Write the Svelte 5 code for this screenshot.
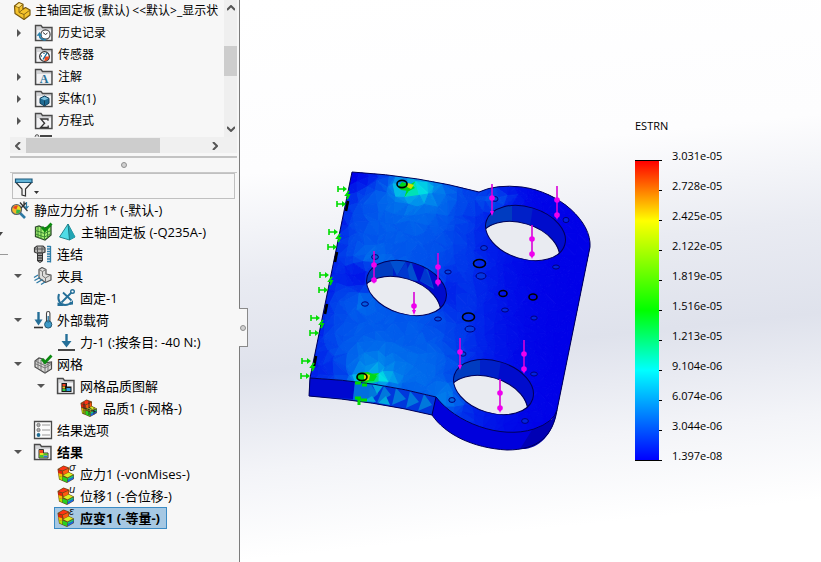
<script>
  // icon: key into the icon snippet; depth: indentation level; open: caret state (unset = leaf)
  const featureTree = [
    { depth: 0, icon: 'part', label: '主轴固定板 (默认) <<默认>_显示状' },
    { depth: 1, icon: 'history', label: '历史记录', open: false },
    { depth: 1, icon: 'sensor', label: '传感器' },
    { depth: 1, icon: 'note', label: '注解', open: false },
    { depth: 1, icon: 'solid', label: '实体(1)', open: false },
    { depth: 1, icon: 'equation', label: '方程式', open: false },
    { depth: 1, icon: 'material', label: '' }
  ]

  const studyTree = [
    { depth: 0, icon: 'study', label: '静应力分析 1* (-默认-)' },
    { depth: 1, icon: 'meshPart', extra: 'pyramid', label: '主轴固定板 (-Q235A-)' },
    { depth: 1, icon: 'bolt', label: '连结' },
    { depth: 1, icon: 'fixture', label: '夹具', open: true },
    { depth: 2, icon: 'anchor', label: '固定-1' },
    { depth: 1, icon: 'loads', label: '外部载荷', open: true },
    { depth: 2, icon: 'force', label: '力-1 (:按条目: -40 N:)' },
    { depth: 1, icon: 'mesh', label: '网格', open: true },
    { depth: 2, icon: 'plotFolder', label: '网格品质图解', open: true },
    { depth: 3, icon: 'quality', label: '品质1 (-网格-)' },
    { depth: 1, icon: 'options', label: '结果选项' },
    { depth: 1, icon: 'results', label: '结果', open: true, bold: true },
    { depth: 2, icon: 'plot', mark: 'sigma', label: '应力1 (-vonMises-)' },
    { depth: 2, icon: 'plot', mark: 'u', label: '位移1 (-合位移-)' },
    { depth: 2, icon: 'plot', mark: 'epsilon', label: '应变1 (-等量-)', bold: true }
  ]

  const marks = { sigma: 'σ', u: 'u', epsilon: 'ε' }

  let selected = $state(14)

  const legend = [
    '3.031e-05', '2.728e-05', '2.425e-05', '2.122e-05', '1.819e-05', '1.516e-05',
    '1.213e-05', '9.104e-06', '6.074e-06', '3.044e-06', '1.397e-08'
  ]

  // local strain peaks: x, y, rx, ry, amplitude
  const peaks = [
    [420, 192, 34, 26, 0.12],
    [416, 189, 18, 11, 0.28],
    [406, 186, 9, 5, 0.26],
    [374, 368, 26, 22, 0.12],
    [376, 379, 18, 8, 0.3],
    [366, 378, 8, 5, 0.26],
    [425, 370, 34, 26, 0.06],
    [448, 397, 16, 12, 0.14],
    [372, 256, 14, 8, 0.08],
    [364, 304, 10, 6, 0.08],
    [496, 200, 18, 10, 0.14],
    [358, 277, 18, 14, -0.16],
    [356, 176, 32, 14, -0.16],
    [450, 292, 12, 24, -0.08],
    [330, 372, 22, 18, -0.08]
  ]

  const ramp = [
    [0, [0, 0, 232]],
    [0.12, [0, 36, 234]],
    [0.26, [0, 96, 236]],
    [0.42, [0, 150, 236]],
    [0.62, [0, 226, 226]],
    [0.8, [0, 220, 20]],
    [1, [220, 230, 0]]
  ]

  function strain(x, y) {
    const fromEdge = x - (352 - (y - 172) * 0.204)
    const base = 0.25 / (1 + Math.exp((x - 480 + (y - 300) * 0.05) / 22)) - 0.13 * Math.exp(-fromEdge / 14)
    return peaks.reduce((sum, [cx, cy, rx, ry, a]) => sum + a * Math.exp(-(((x - cx) / rx) ** 2) - ((y - cy) / ry) ** 2), base)
  }

  function shade(t) {
    const v = Math.min(0.999, Math.max(0, t))
    const i = ramp.findIndex(([stop]) => stop > v)
    const [a, from] = ramp[i - 1]
    const [b, to] = ramp[i]
    const k = (v - a) / (b - a)
    return `rgb(${from.map((c, n) => Math.round(c + (to[n] - c) * k)).join(',')})`
  }

  function noise(a, b) {
    const s = Math.sin(a * 127.1 + b * 311.7) * 43758.5453
    return s - Math.floor(s)
  }

  const CELL = 10
  const node = (c, r) => [
    296 + c * CELL + (noise(c, r) - 0.5) * 7,
    164 + r * CELL + (noise(r + 40, c) - 0.5) * 7
  ]

  const facets = []
  for (let r = 0; r < 28; r++) {
    for (let c = 0; c < 30; c++) {
      const [p, q, s, t] = [node(c, r), node(c + 1, r), node(c + 1, r + 1), node(c, r + 1)]
      const split = noise(c, r + 9) > 0.5 ? [[p, q, s], [p, s, t]] : [[p, q, t], [q, s, t]]
      split.forEach((tri, n) => {
        const x = (tri[0][0] + tri[1][0] + tri[2][0]) / 3
        const y = (tri[0][1] + tri[1][1] + tri[2][1]) / 3
        const v = strain(x, y)
        facets.push({ points: tri.join(' '), fill: shade(v + (noise(c + n * 50, r) - 0.5) * (0.006 + Math.max(0, v) * 0.06)) })
      })
    }
  }

  const holes = [[0, 0], [-119, 55], [-32, 154]]

  // load arrows: x, top, tip, joints
  const arrows = [
    [492, 184, 216, [198]],
    [557, 186, 220, [200, 215]],
    [532, 225, 259, [239, 254]],
    [374, 251, 284, [265, 280]],
    [438, 253, 287, [267, 282]],
    [414, 292, 315, [306]],
    [460, 338, 370, [352]],
    [524, 340, 374, [354, 369]],
    [500, 379, 413, [393, 408]]
  ]

  const clamps = [
    [338, 189], [337, 204], [329, 232], [328, 247], [320, 275],
    [319, 290], [311, 318], [310, 333], [302, 361], [301, 376]
  ]
  const clampTurns = [[347, 195], [338, 238], [330, 281], [321, 324], [312, 367]]
  const slots = [[347, 206], [336, 257], [326, 309], [315, 361]]

  const boldRings = [
    [479.5, 263.5, 6, 4], [503, 293.5, 4, 3], [533, 297, 4, 3],
    [468.5, 317, 6, 4], [402, 184, 5, 3.6], [362, 377, 5, 3.6]
  ]
  const fineRings = [
    [495, 199, 3, 2.4], [566, 220, 3, 2.6], [484, 248, 3.4, 2.4], [448, 272, 3.2, 2], [481, 276, 5, 3.2],
    [556, 267, 3.4, 2], [505, 310, 3.4, 2], [534, 318, 3.2, 2], [470, 329, 5, 3], [463, 354, 3, 2.2],
    [438, 319, 3.4, 2], [375, 257, 3.4, 2.4], [365, 304, 3.4, 2.2], [452, 400, 3.2, 2.4], [525, 421, 3.4, 2.4],
    [534, 374, 3.4, 2]
  ]
</script>

{#snippet folder()}
  <path d="M1.500 4.500V2.500h5.500l1.500 2H18V17.500H1.500Z" fill="#d4d5d7" stroke="#4a4a4a" stroke-width="1.400" />
  <path d="M3 7h14v9.500H3z" fill="#f2f2f4" />
{/snippet}

{#snippet lBlock()}
  <path d="M1.500 5 7.500 1.500 13 3.500V8L18 10.500V15L11 19 3 15.500Z" fill="#6a4a18" />
  <path d="M2.500 5.200 7.500 2.300 12.300 4 6.500 6.500Z" fill="#ff3414" />
  <path d="M2.200 6 6.200 7.300v3L2.400 9Z" fill="#e8200c" />
  <path d="M2.400 9 6.200 10.300v2.700L3 12Z" fill="#f8b800" />
  <path d="M3 12 6.200 13v3.300L3.500 15Z" fill="#b8e000" />
  <path d="M6.800 7.300 12.400 4.800v3.500L7.600 10.800Z" fill="#ff5a10" />
  <path d="M7.200 11.300 12.600 8.500 17 10.500 11.500 13.500Z" fill="#d8f020" />
  <path d="M6.600 12.500 11 14.200v4L6.600 16.400Z" fill="#28d020" />
  <path d="M11.600 14.300 17.500 11.200v1.800L11.600 16.200Z" fill="#10c880" />
  <path d="M11.600 16.200 17.500 13v1.800L11.600 18.200Z" fill="#1468f0" />
{/snippet}

{#snippet check()}
  <path d="M9 5 12 8.500 18.500 1.500" fill="none" stroke="#0c8a10" stroke-width="2.800" />
{/snippet}

{#snippet icon(kind, mark)}
  <svg class="icon" viewBox="0 0 20 20" aria-hidden="true">
    {#if kind === 'part'}
      <path d="M3.500 5 8 1.500l4 1.800v5L14.500 6.500l4.500 2.500v5L13 18.500 4 12.500Z" fill="#f5c32c" stroke="#7a5a10" stroke-width="1.200" stroke-linejoin="round" />
      <path d="M3.500 5 8 6.500 12 3.300M8 6.500v5l5 2 6-4.500M13 13.500V18.500M8 11.500 12 8.300" fill="none" stroke="#8a6914" />
      <path d="M4.800 5l3 1L11 3.500 8 2.300Z" fill="#ffe486" />
    {:else if kind === 'history'}
      {@render folder()}
      <circle cx="11.500" cy="11.500" r="4.600" fill="#fff" stroke="#444" stroke-width="1.200" />
      <path d="M11.500 11.500 9 9.500M11.500 11.500l2-1.500" stroke="#333" />
      <path d="M12 16.500c-3 .8-6.500-.5-6.500-4.500" fill="none" stroke="#2b82ad" stroke-width="1.800" />
      <path d="M2.600 12.800 5.500 9l2.800 3.800Z" fill="#2b82ad" />
    {:else if kind === 'sensor'}
      {@render folder()}
      <circle cx="10.500" cy="11.500" r="4.800" fill="#fff" stroke="#333" stroke-width="1.300" />
      <path d="M10.500 11.500h4.600a4.600 4.600 0 0 1-4.600 4.600Z" fill="#f04820" />
      <path d="M9 14.500 13 8M7 11h1M10 8v1" stroke="#1b6e9c" stroke-width="1.400" />
    {:else if kind === 'note'}
      {@render folder()}
      <text class="glyph serif" x="10" y="16" text-anchor="middle">A</text>
    {:else if kind === 'solid'}
      {@render folder()}
      <path d="M6 9.300 10.500 7 15 9.300v5L10.500 17 6 14.300Z" fill="#1f6c94" stroke="#123f5a" />
      <path d="M6.600 9.500 10.500 7.800l3.900 1.700-3.900 1.700Z" fill="#7fc2df" />
      <path d="M10.500 11.500V16.500" stroke="#123f5a" />
    {:else if kind === 'equation'}
      {@render folder()}
      <path d="M14 9.800V8H6.800l3.800 4.200L6.800 16.300H14.200V14.500" fill="none" stroke="#333" stroke-width="1.300" />
    {:else if kind === 'material'}
      <circle cx="3" cy="3.500" r="1.800" fill="#ddd" stroke="#555" />
      <path d="M6 3h12" stroke="#444" stroke-width="2" />
    {:else if kind === 'study'}
      <path d="m10 13 5 5" stroke="#2d7aa5" stroke-width="2.600" />
      <circle cx="6.500" cy="9.500" r="5" fill="#f4b62a" stroke="#55616a" stroke-width="1.200" />
      <path d="M3 8a4 4 0 0 1 5-2.300L6.500 9.500Z" fill="#e84520" />
      <path d="M8 6a4 4 0 0 1 2.500 4L6.500 9.500Z" fill="#e8e020" />
      <path d="M10.500 10A4 4 0 0 1 6 13.500l.5-4Z" fill="#35b848" />
      <path d="M10 2.500 17.500 11M11 8l5-5M14 1.500v5" stroke="#333" stroke-width="1.300" />
      <path d="M16.500 2v6M14.500 6l2 2.500 2-2.500" fill="none" stroke="#2d7aa5" stroke-width="1.200" />
    {:else if kind === 'meshPart'}
      <path d="M2.500 5 6 4l5 2 7-2v9l-6 5L2.500 14.500Z" fill="#a4f070" stroke="#2d4a2a" stroke-width="1.300" />
      <path d="M5 5v10.500M8 5v12M11.500 7v11M14.500 6v10M2.500 8.500l9 3 6.500-3M2.500 12l9 3 6.500-3.500" fill="none" stroke="#3c8a34" />
      {@render check()}
    {:else if kind === 'mesh'}
      <path d="M2 7 6 4l5 1.500V9l7.500-1v7l-6.500 4L2 13Z" fill="#d9d9d7" stroke="#4a4a4a" stroke-width="1.200" />
      <path d="M5 5v9.500M8 6v10.500M12 11v8M15 9v8M2 9.500l10 4.500 6-3.500M2 7l10 4.500L18 9" fill="none" stroke="#777" />
      {@render check()}
    {:else if kind === 'pyramid'}
      <path d="M11 2 18 15 12.500 18 2.500 15Z" fill="#4fdce6" stroke="#23868f" stroke-linejoin="round" />
      <path d="M11 2 18 15 12.500 18Z" fill="#22a5b4" />
      <path d="M11 2 12.500 18" stroke="#1a7883" />
    {:else if kind === 'bolt'}
      <path d="M1.500 4 4 2h6l2 2v4L9.500 9h-6L1.500 8Z" fill="#b9b9b7" stroke="#3d3d3d" stroke-width="1.200" />
      <path d="M2 5h9.500M4.500 2.500v6M9 2.500v6" stroke="#555" />
      <path d="M4.500 9h5v8l-2.500 1.500L4.500 17Z" fill="#999" stroke="#333" />
      <path d="M4.500 11.500h5M4.500 14h5M4.500 16.500h5" stroke="#333" />
      <path d="M17.500 2v16.500M14 2.500h3.500M14 5h3.500M14 7.500h3.500M14 10h3.500M14 12.500h3.500M14 15h3.500M14 17.500h3.500" stroke="#2f7ea9" stroke-width="1.300" />
    {:else if kind === 'fixture'}
      <path d="M6 6V3.500L9 1.500l4 2V8l5 1v5L12.500 16.500 6 12Z" fill="#dededc" stroke="#555" stroke-width="1.200" stroke-linejoin="round" />
      <path d="M6 3.500 9.500 5.500 13 3.500M9.500 5.500V10l3 2 5-3M12.500 12v4" fill="none" stroke="#777" />
      <path d="M1 11.500 5 9M1.500 14.500 7 11.500M3.500 17l6-3.500M8 18.500l4-2.500" stroke="#2d7aa5" stroke-width="1.400" />
    {:else if kind === 'anchor'}
      <path d="M3 6c-2 6 1 11 6 11 3 0 5-1 6.500-3" fill="none" stroke="#256f98" stroke-width="2" />
      <path d="M5.500 14.500 16 4M7 4.500l8.500 8" stroke="#256f98" stroke-width="1.800" />
      <circle cx="16.500" cy="3.500" r="1.800" fill="#fff" stroke="#256f98" stroke-width="1.400" />
      <path d="M1.500 14.500v3.500H8L5.500 16ZM13 17l4-.5v-4.500Z" fill="#256f98" />
    {:else if kind === 'loads'}
      <path d="M5.500 2v10" stroke="#256f98" stroke-width="2.400" />
      <path d="M1.500 9.500h8L5.500 15.500Z" fill="#256f98" />
      <path d="M1 17.500h9" stroke="#333" stroke-width="1.600" />
      <path d="M13.500 3.200a1.700 1.700 0 0 1 3.400 0V11h-3.400Z" fill="#fff" stroke="#444" stroke-width="1.100" />
      <circle cx="15.200" cy="14.500" r="3.600" fill="#3e9bc8" stroke="#26566f" />
      <path d="M15.200 6v7" stroke="#2c7ca6" stroke-width="1.400" />
    {:else if kind === 'force'}
      <path d="M10.500 2v10" stroke="#256f98" stroke-width="2.400" />
      <path d="M5.500 9h10l-5 6.500Z" fill="#256f98" />
      <path d="M2 18h17" stroke="#333" stroke-width="1.800" />
    {:else if kind === 'plotFolder'}
      {@render folder()}
      <path d="M5.500 7h5.500v3.500h4.500v5.500H5.500Z" fill="#181818" />
      <path d="M6.500 8h3v2h-3Z" fill="#f04020" />
      <path d="M6.500 10.500h2.500v2H6.500Z" fill="#f0c020" />
      <path d="M6.500 13h3v2h-3Z" fill="#30c840" />
      <path d="M10.500 12h4v3h-4Z" fill="#30a0e0" />
    {:else if kind === 'results'}
      {@render folder()}
      <path d="M6 7.500h4.500V11h4.500v5H6Z" fill="#f0d820" stroke="#333" />
      <path d="M6.500 8h3.500v3H6.500Z" fill="#f04020" />
      <path d="M10.500 11.500h4V13h-4ZM6.500 13h4v2.500h-4Z" fill="#40c830" />
      <path d="M10.500 13.500h4v2h-4Z" fill="#2878e0" />
    {:else if kind === 'quality'}
      {@render lBlock()}
      <path d="M5 4.200v12M10 3v14M2.500 9.500 8 11l9 3M10 9l6 5M15 9.500v7" fill="none" stroke="#222" stroke-width="0.800" />
    {:else if kind === 'options'}
      <path d="M1.500 1.500h17v17h-17Z" fill="#fbfbfb" stroke="#4a4a4a" stroke-width="1.300" />
      <circle cx="5.500" cy="5" r="1.700" fill="#aaa" stroke="#666" stroke-width="0.700" />
      <circle cx="5.500" cy="10" r="1.700" fill="#aaa" stroke="#666" stroke-width="0.700" />
      <circle cx="5.500" cy="15" r="1.900" fill="#1f6c94" />
      <path d="M9 5h8M9 10h8M9 15h8" stroke="#999" />
    {:else if kind === 'plot'}
      {@render lBlock()}
      <text class="glyph mark" x="13" y="7">{marks[mark]}</text>
    {/if}
  </svg>
{/snippet}

{#snippet caret(open)}
  <svg class="caret" viewBox="0 0 8 8" aria-hidden="true">
    {#if open}
      <path d="M0 2h8L4 6Z" />
    {:else}
      <path d="M2 0v8L6 4Z" />
    {/if}
  </svg>
{/snippet}

{#snippet tree(items, active, onpick)}
  {#each items as item, i}
    <li class="row depth-{item.depth}">
      {#if item.depth > 0}
        <span class="caret-cell">
          {#if item.open !== undefined}{@render caret(item.open)}{/if}
        </span>
      {/if}
      <button class="item" class:bold={item.bold} class:selected={i === active} onclick={() => onpick(i)}>
        {@render icon(item.icon, item.mark)}
        {#if item.extra}{@render icon(item.extra)}{/if}
        <span>{item.label}</span>
      </button>
    </li>
  {/each}
{/snippet}

<div class="app">
  <aside class="panel">
    <svg class="gutter" viewBox="0 0 10 562" aria-hidden="true">
      <path d="M-4 232h7l-3 4Z" fill="#444" />
      <path d="M0 254.500h8" stroke="#999" />
    </svg>

    <div class="stack">
      <div class="features">
        <ul class="tree small">
          {@render tree(featureTree, -1, () => {})}
        </ul>
        <div class="vbar">
          <button aria-label="Scroll up"><svg viewBox="0 0 8 6"><path d="M0 5 4 1l4 4" /></svg></button>
          <div class="vtrack"><div class="vthumb"></div></div>
          <button aria-label="Scroll down"><svg viewBox="0 0 8 6"><path d="M0 1l4 4 4-4" /></svg></button>
        </div>
      </div>
      <div class="hbar">
        <button aria-label="Scroll left"><svg viewBox="0 0 6 8"><path d="M5 0 1 4l4 4" /></svg></button>
        <div class="htrack"><div class="hthumb"></div></div>
        <button aria-label="Scroll right"><svg viewBox="0 0 6 8"><path d="M1 0l4 4-4 4" /></svg></button>
      </div>
      <div class="splitter"><span class="knob"></span></div>

      <div class="filter">
        <button aria-label="Filter">
          <svg viewBox="0 0 26 20" aria-hidden="true">
            <path d="M2 5.500 8 12v6l3.500 1V12l6-6.500Z" fill="#f5f5f5" stroke="#333" stroke-width="1.200" />
            <path d="M1.500 2h16.500v3.500H1.500Z" fill="#5fb2d6" stroke="#1d587a" stroke-width="1.200" />
            <path d="M20 14h5l-2.500 3Z" fill="#333" />
          </svg>
        </button>
        <input type="text" aria-label="Filter tree" />
      </div>

      <ul class="tree">
        {@render tree(studyTree, selected, (i) => (selected = i))}
      </ul>
    </div>

    <button class="handle" aria-label="Collapse panel"><span class="knob"></span></button>
  </aside>

  <main class="viewport">
    <svg class="model" viewBox="298 168 296 286" role="img" aria-label="ESTRN">
      <defs>
        <clipPath id="face">
          <path d="M352 172 Q420 176 479 192 Q496 184 522 187 C560 192 592 222 590 247 L557 410 Q554 422 534 429 C500 440 455 422 436 397 Q375 381 310 378Z" />
        </clipPath>
        <clipPath id="bore">
          <ellipse cx="525.500" cy="233" rx="41" ry="26" transform="rotate(17 525.500 233)" />
        </clipPath>
      </defs>

      <!-- side walls below the top face -->
      <path d="M310 378 436 397 552 420 590 247 557 410 C553 436 538 450 507 450 C472 448 445 434 432 415 Q375 401 309 396Z" fill="#0000dc" />
      <path d="M532 430 C548 424 556 418 557 410 C553 436 538 450 520 449Z" fill="#0000b4" />
      <path d="M310 378 Q375 381 436 397 L432 415 Q375 401 309 396Z" fill="#0038dc" />
      <path d="M310 378 355 381 353 399 309 396Z" fill="#0008d0" />
      <path d="M355 381 372 383 374 403 353 400Z" fill="#0070e0" />
      <path d="M370 384 378 394 368 402ZM384 386 391 395 377 403ZM396 388 406 399 392 405ZM410 391 419 402 406 408ZM424 394 432 405 418 411Z" fill="#0078dc" />
      <path d="M372 384 383 386 377 394ZM386 396 390 405 378 403ZM372 396 376 402 364 401Z" fill="#00a8dc" />

      <g clip-path="url(#face)">
        {#each facets as f}
          <polygon points={f.points} fill={f.fill} stroke={f.fill} />
        {/each}
        <path d="M398 187l4-5 10 3 3 3-6 3-8-1Z" fill="#00d818" />
        <path d="M408 183l6 2-3 4-4-2Z" fill="#c8e000" />
        <path d="M358 373l10-1 9 4-3 5-12 1-6-3Z" fill="#00d818" />
        <path d="M364 373l6 2-1 5-5 1Z" fill="#e0d800" />
      </g>

      <path class="edge" d="M352 172 Q420 176 479 192 Q496 184 522 187 C560 192 592 222 590 247 L557 410 Q554 422 534 429 C500 440 455 422 436 397 Q375 381 310 378Z" />
      <path class="edge" d="M310 378 309 396 Q375 401 432 415 L436 397M432 415 C445 434 472 448 507 450 C538 450 553 436 557 410" />

      {#each holes as [dx, dy], i}
        <g transform="translate({dx} {dy})">
          <g clip-path="url(#bore)">
            <path d="M480 200h90v70h-90Z" fill="#000ccc" />
            <path d="M480 236V200h36l-4 22Z" fill="#003cc0" />
            <path d="M512 200h22l-4 26-18-4Z" fill="#0020c8" />
            {#if i === 1}
              <path d="M508 204l8 17 9-15ZM530 207l-9 17 16 2ZM546 212l-7 14 14 8Z" fill="#0050d0" />
              <path d="M516 221l9-14 4 18ZM539 226l5-14 8 20Z" fill="#0038d0" />
            {/if}
            <ellipse class="through" cx="519.500" cy="249" rx="41" ry="26" transform="rotate(17 519.500 249)" />
          </g>
          <ellipse class="edge" cx="525.500" cy="233" rx="41" ry="26" transform="rotate(17 525.500 233)" />
        </g>
      {/each}

      {#each fineRings as [x, y, rx, ry]}
        <ellipse cx={x} cy={y} {rx} {ry} fill="#0050d0" fill-opacity="0.400" stroke="#00007c" />
      {/each}
      {#each boldRings as [x, y, rx, ry]}
        <ellipse cx={x} cy={y} {rx} {ry} fill="none" stroke="#000" stroke-width="1.600" />
      {/each}

      {#each slots as [x, y]}
        <path d="M{x + 1} {y - 5}l-2 10" stroke="#000" stroke-width="2.600" />
      {/each}

      <g stroke="#00dc00" fill="#00dc00">
        {#each clamps as [x, y]}
          <path d="M{x} {y - 3}v6M{x} {y}h7" stroke-width="1.600" />
          <path d="M{x + 5} {y - 3}l4 3-4 3Z" stroke="none" />
        {/each}
        {#each clampTurns as [x, y]}
          <path d="M{x + 2} {y - 4}l-3 4h3l-2 4" fill="none" stroke-width="1.800" />
        {/each}
        <path d="M355 383h6M362 385h5M355 398h6M361 400h6M359 399v6" stroke-width="3" />
      </g>

      <g stroke="#d800d8" fill="#ee00ee">
        {#each arrows as [x, top, tip, joints]}
          <path d="M{x} {top}V{tip - 2}" stroke-width="1.600" />
          <path d="M{x - 2} {tip - 5}h4l-2 5Z" stroke="none" />
          {#each joints as y}
            <circle cx={x} cy={y} r="2.800" stroke="none" />
          {/each}
        {/each}
      </g>
    </svg>

    <section class="legend">
      <h2>ESTRN</h2>
      <div class="scale">
        <div class="bar">
          <div class="ramp"></div>
          <div class="ticks">
            {#each legend as value (value)}<i></i>{/each}
          </div>
        </div>
        <ol>
          {#each legend as value (value)}
            <li>{value}</li>
          {/each}
        </ol>
      </div>
    </section>
  </main>
</div>

<style>
  :global(body) {
    margin: 0;
    font-family: 'Open Sans', 'Noto Sans CJK SC', sans-serif;
    font-size: 13px;
    color: #000;
  }

  .app {
    display: flex;
    min-height: 100vh;
    overflow: hidden;
  }

  button {
    padding: 0;
    border: 0;
    background: none;
    font: inherit;
    color: inherit;
  }

  ul,
  ol {
    margin: 0;
    padding: 0;
    list-style: none;
  }

  .panel {
    position: relative;
    display: flex;
    flex: 0 0 240px;
    min-width: 0;
    box-sizing: border-box;
    background: #f7f7f7;
    border-right: 1px solid #7c7c7c;
  }

  .gutter {
    flex: 0 0 10px;
    width: 10px;
    height: 562px;
  }

  .stack {
    flex: 1;
    min-width: 0;
    padding-right: 2px;
  }

  .features {
    display: flex;
    height: 137px;
    overflow: hidden;
  }

  .tree.small {
    flex: 1;
    min-width: 0;
    overflow: hidden;
    padding-left: 1px;
    font-size: 12px;
  }

  .row {
    display: flex;
    align-items: center;
    height: 22px;
  }

  .depth-2 {
    padding-left: 23px;
  }

  .depth-3 {
    padding-left: 46px;
  }

  .caret-cell {
    flex: 0 0 23px;
    padding-left: 4px;
    box-sizing: border-box;
    line-height: 0;
  }

  .caret {
    width: 8px;
    height: 8px;
    fill: #555;
  }

  .item {
    display: flex;
    align-items: center;
    gap: 4px;
    height: 22px;
    margin-left: -2px;
    padding: 0 6px 0 1px;
    border: 1px solid transparent;
    box-sizing: border-box;
    line-height: 20px;
    white-space: nowrap;
  }

  .item.selected {
    background: #a6c8e3;
    border-color: #3a8ac4;
  }

  .bold {
    font-weight: 700;
  }

  .icon {
    flex: none;
    width: 20px;
    height: 20px;
    overflow: visible;
  }

  .glyph.serif {
    font-family: 'Liberation Serif', serif;
    font-size: 12px;
    font-weight: 700;
    fill: #256f98;
  }

  .glyph.mark {
    font-family: 'Liberation Sans', sans-serif;
    font-size: 11px;
    font-style: italic;
    font-weight: 400;
    fill: #111;
  }

  .vbar {
    display: flex;
    flex-direction: column;
    flex: 0 0 13px;
    background: #efefef;
  }

  .vbar button,
  .hbar button {
    display: flex;
    align-items: center;
    justify-content: center;
    flex: 0 0 16px;
  }

  .vbar svg {
    width: 8px;
    height: 6px;
  }

  .hbar svg {
    width: 6px;
    height: 8px;
  }

  .vbar path,
  .hbar path {
    fill: none;
    stroke: #555;
    stroke-width: 2;
  }

  .vtrack,
  .htrack {
    flex: 1;
  }

  .vthumb {
    height: 30px;
    margin-top: 30px;
    background: #cdcdcd;
  }

  .hbar {
    display: flex;
    height: 16px;
    padding: 1px 14px 0 0;
    background: #f0f0f0;
    box-sizing: border-box;
  }

  .hthumb {
    width: 74%;
    height: 100%;
    background: #cdcdcd;
  }

  .splitter {
    display: flex;
    align-items: center;
    justify-content: center;
    height: 17px;
    margin-top: 3px;
    border-top: 2px solid #c3c3c3;
    border-bottom: 1px solid #c8c8c8;
    box-sizing: border-box;
  }

  .knob {
    width: 6px;
    height: 6px;
    border: 1px solid #8f8f8f;
    border-radius: 50%;
    background: #d0d0d0;
    box-sizing: border-box;
  }

  .filter {
    display: flex;
    height: 26px;
    margin: 0 2px;
    border: 1px solid #c0c0c0;
    box-sizing: border-box;
  }

  .filter button {
    padding: 2px 0 0 1px;
    line-height: 0;
  }

  .filter svg {
    width: 26px;
    height: 20px;
  }

  .filter input {
    flex: 1;
    min-width: 0;
    border: 0;
    background: none;
    font: inherit;
    outline: 0;
  }

  /* collapse grip overlapping the viewport edge */
  .handle {
    position: absolute;
    left: 239px;
    top: 308px;
    display: flex;
    align-items: center;
    justify-content: center;
    width: 9px;
    height: 39px;
    background: #f7f7f7;
    border: 1px solid #8a8a8a;
    border-left: 0;
    box-sizing: border-box;
  }

  .handle .knob {
    flex: none;
  }

  .viewport {
    display: flex;
    align-items: flex-start;
    flex: 1;
    min-width: 0;
    padding-left: 58px;
    background: linear-gradient(174deg, #fff 0%, #fdfdfe 28%, #e9ebf2 45%, #dfe2ec 60%, #f3f4f8 76%, #fff 90%);
  }

  .model {
    flex: none;
    width: 296px;
    margin-top: 168px;
  }

  .edge {
    fill: none;
    stroke: #000058;
    stroke-width: 1;
  }

  .through {
    fill: #e9ebf1;
    stroke: #000058;
  }

  .legend {
    margin: 118px 0 0 41px;
    font-size: 11px;
  }

  .legend h2 {
    margin: 0;
    font-size: 11px;
    font-weight: 400;
    line-height: 16px;
  }

  .scale {
    display: flex;
    gap: 10px;
    margin-top: 7px;
  }

  .bar {
    display: flex;
    height: 301px;
    margin-top: 19px;
  }

  .ramp {
    width: 24px;
    border: solid #000;
    border-width: 1px 0;
    box-sizing: border-box;
    background: linear-gradient(#f00, #ff0 20%, #0f0 50%, #0ff 70%, #00f);
  }

  .ticks {
    display: flex;
    flex-direction: column;
    justify-content: space-between;
  }

  .ticks i {
    width: 3px;
    height: 1px;
    background: #000;
  }

  .legend li {
    line-height: 30px;
  }
</style>
